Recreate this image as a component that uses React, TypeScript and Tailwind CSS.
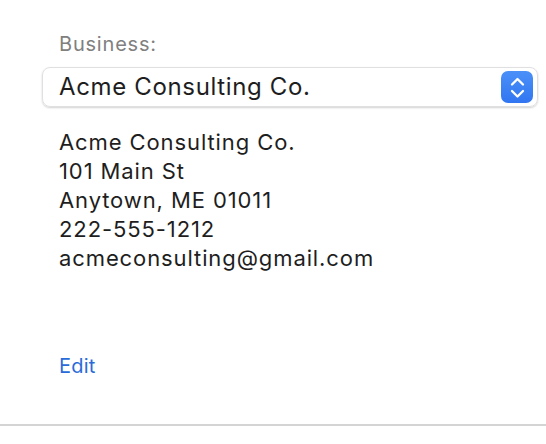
import React from 'react';

const lines = [
  'Acme Consulting Co.',
  '101 Main St',
  'Anytown, ME 01011',
  '222-555-1212',
  'acmeconsulting@gmail.com',
];

export default function App() {
  return (
    <div
      className="w-[546px] h-[444px] bg-white flex flex-col"
      style={{ fontFamily: 'Inter, "Liberation Sans", sans-serif' }}
    >
      <div className="pl-[42px] pr-[8px] pt-[32px]">
        <div className="pl-[17px] text-[20px] leading-[24px] tracking-[0.8px] text-[#808080]">Business:</div>
        <div className="mt-[11px] h-[40px] rounded-[8px] border border-[#e0e0e0] shadow-[0_1px_2px_rgba(0,0,0,0.18)] flex items-center justify-between pl-[16px] pr-[4px]">
          <span className="text-[24px] tracking-[0.65px] text-[#1e1e1e]">Acme Consulting Co.</span>
          <div className="w-[32px] h-[32px] rounded-[7px] bg-gradient-to-b from-[#4b90f8] to-[#3176f1] flex items-center justify-center">
            <svg width="32" height="32" viewBox="0 0 32 32" fill="none" stroke="white" strokeWidth="2.3" strokeLinecap="round" strokeLinejoin="round">
              <path d="M11 13.5 L16.5 8 L22 13.5" />
              <path d="M11 20 L16.5 25.5 L22 20" />
            </svg>
          </div>
        </div>
        <div className="mt-[21px] pl-[17px] text-[22px] leading-[29px] tracking-[0.9px] text-[#1e1e1e]">
          {lines.map((l) => (
            <div key={l}>{l}</div>
          ))}
        </div>
        <div className="mt-[81px] pl-[17px] text-[20px] leading-[24px] tracking-[0.2px] text-[#2a6bd9]">Edit</div>
      </div>
      <div className="mt-[46px] h-[2px] bg-[#d4d4d4]" />
    </div>
  );
}
